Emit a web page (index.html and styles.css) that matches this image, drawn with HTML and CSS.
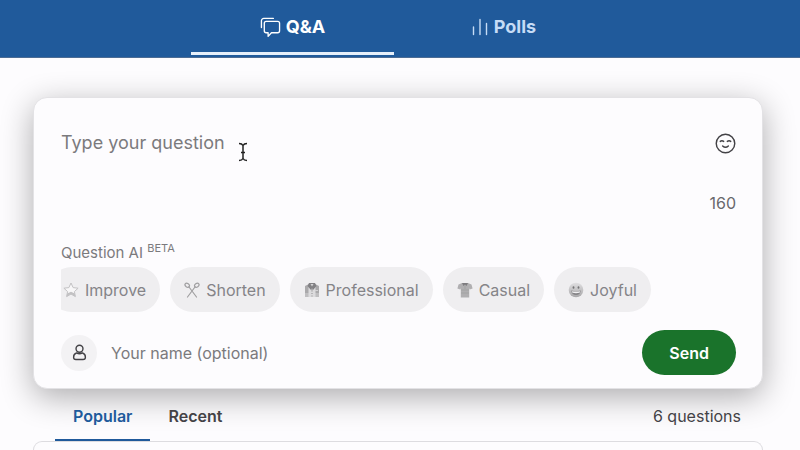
FILE: index.html
```
<!DOCTYPE html>
<html lang="en">
<head>
    <meta charset="UTF-8">
    <meta name="viewport" content="width=device-width, initial-scale=1.0">
    <title>Q&amp;A</title>
    <link rel="stylesheet" href="styles.css">
</head>
<body>
    <header class="topbar">
        <nav class="main-tabs">
            <a href="#qa" class="main-tab active">
                <svg width="21" height="21" viewBox="0 0 22 22" fill="none" stroke="currentColor" stroke-width="1.4" stroke-linecap="round" stroke-linejoin="round">
                    <path d="M1.500 11V4A2.500 2.500 0 0 1 4 1.500H14"/>
                    <path d="M6.500 4.500h12a2 2 0 0 1 2 2v8a2 2 0 0 1-2 2H12l-3.500 3.800v-3.800h-2a2 2 0 0 1-2-2v-8a2 2 0 0 1 2-2z"/>
                </svg>
                Q&amp;A
            </a>
            <a href="#polls" class="main-tab">
                <svg width="18" height="18" viewBox="0 0 18 18" fill="none" stroke="currentColor" stroke-width="1.4" stroke-linecap="round">
                    <path d="M2.500 9v7.500M9 1.500v15M15.500 5.500v11"/>
                </svg>
                Polls
            </a>
        </nav>
    </header>

    <main class="page">
        <form class="ask-card">
            <div class="question-row">
                <textarea class="question-input" aria-label="Question" placeholder="Type your question"></textarea>
                <button type="button" class="emoji-button" aria-label="Insert emoji">
                    <svg width="21" height="21" viewBox="0 0 22 22" fill="none" stroke="currentColor" stroke-width="1.500" stroke-linecap="round">
                        <circle cx="11" cy="11" r="9.700"/>
                        <path d="M5.500 8.800q1.700-1.500 3.600 0M12.900 8.800q1.900-1.500 3.600 0M8 13.600q3 2.800 6 0"/>
                    </svg>
                </button>
            </div>
            <div class="char-count">160</div>

            <div class="ai-label">Question AI <sup>BETA</sup></div>
            <div class="chips">
                <button type="button" class="chip">
                    <svg width="16" height="16" viewBox="0 0 16 16">
                        <path d="M8 1l2.100 4.600 5 .6-3.700 3.400 1 5L8 12.100l-4.400 2.500 1-5L.9 6.200l5-.6z" fill="#f8f7f8" stroke="#c3c2c4" stroke-width="1" stroke-linejoin="round"/>
                        <path d="M3.600 14.600l.6-3L8 9.800l3.800 1.800.6 3L8 12.100z" fill="#c2c1c3"/>
                    </svg>
                    Improve
                </button>
                <button type="button" class="chip">
                    <svg width="16" height="16" viewBox="0 0 16 16" fill="none" stroke="#a09fa1" stroke-width="1.200" stroke-linecap="round">
                        <ellipse cx="3.200" cy="3.200" rx="2.400" ry="1.800" transform="rotate(35 3.200 3.200)"/>
                        <ellipse cx="12.800" cy="3.200" rx="2.400" ry="1.800" transform="rotate(-35 12.800 3.200)"/>
                        <path d="M5 5l7.500 10M11 5l-7.500 10"/>
                    </svg>
                    Shorten
                </button>
                <button type="button" class="chip">
                    <svg width="16" height="16" viewBox="0 0 16 16">
                        <path d="M1 4l4-2h6l4 2v11H1z" fill="#aaa9ab"/>
                        <path d="M1 11h14v4H1z" fill="#bfbec0"/>
                        <path d="M4.500 2l3.500 7 3.500-7v13h-7z" fill="#dcdbdd"/>
                        <path d="M5 1h6l1.500 3L9 8 8 5.500 7 8 3.500 4z" fill="#828184"/>
                        <path d="M6.500 2h3L8 4.500z" fill="#d5d4d6"/>
                        <path d="M8 6v9" stroke="#8f8e91" stroke-dasharray="1 1.500"/>
                        <path d="M11 8.500h3" stroke="#d3d2d4"/>
                    </svg>
                    Professional
                </button>
                <button type="button" class="chip">
                    <svg width="16" height="16" viewBox="0 0 16 16">
                        <path d="M5 1L1.500 2.500.4 6.500l2.800.9.600-1.200V15.400h8.400V6.200l.6 1.200 2.800-.9-1.100-4L11 1z" fill="#b0afb1"/>
                        <path d="M5 1h6L9.500 4 8 2.500 6.500 4z" fill="#7d7c7f"/>
                        <path d="M8 3v4M4 8h8M4 11h8" stroke="#9b9a9c" stroke-width=".6"/>
                    </svg>
                    Casual
                </button>
                <button type="button" class="chip">
                    <svg width="16" height="16" viewBox="0 0 16 16">
                        <defs>
                            <linearGradient id="face" x2="0" y2="1">
                                <stop offset="0" stop-color="#e0dfe1"/>
                                <stop offset="1" stop-color="#a8a7a9"/>
                            </linearGradient>
                        </defs>
                        <circle cx="8" cy="8" r="7.300" fill="url(#face)"/>
                        <ellipse cx="5.500" cy="5.500" rx=".9" ry="1.200" fill="#747376"/>
                        <ellipse cx="10.500" cy="5.500" rx=".9" ry="1.200" fill="#747376"/>
                        <path d="M3.200 8.500q4.800 1 9.600 0-.6 4.500-4.800 4.500t-4.800-4.500z" fill="#858487"/>
                        <path d="M3.900 9.200q4.100.8 8.200 0l-.5 1.600q-3.600.8-7.200 0z" fill="#f1f0f2"/>
                    </svg>
                    Joyful
                </button>
            </div>

            <div class="send-row">
                <span class="avatar">
                    <svg width="15" height="17" viewBox="0 0 16 18" fill="none" stroke="currentColor" stroke-width="1.500" stroke-linejoin="round">
                        <circle cx="8" cy="5" r="3.700"/>
                        <path d="M4.800 9.500C2.800 10 1.700 11.800 1.700 14c0 1.700.9 2.500 2.500 2.500h7.600c1.600 0 2.500-.8 2.500-2.500 0-2.200-1.100-4-3.100-4.500-1.900 1-4.500 1-6.400 0z"/>
                    </svg>
                </span>
                <input type="text" class="name-input" aria-label="Your name" placeholder="Your name (optional)">
                <button type="submit" class="send-button">Send</button>
            </div>

            <svg class="cursor" width="10" height="20" viewBox="0 0 10 20" fill="none" stroke="#222" stroke-width="1.500">
                <path d="M1 1.500q3 0 4 2 1-2 4-2M5 3v14M1 18.500q3 0 4-2 1 2 4 2M3 10.500h4"/>
            </svg>
        </form>

        <div class="list-head">
            <nav class="sort-tabs">
                <a href="#popular" class="sort-tab active">Popular</a>
                <a href="#recent" class="sort-tab">Recent</a>
            </nav>
            <span class="question-count">6 questions</span>
        </div>
        <section class="question-card" aria-label="Questions"></section>
    </main>
</body>
</html>
```

FILE: styles.css
```
:root {
    --blue: #205a9b;
    --green: #1a732b;
    --surface: #fdfcfe;
    --chip: #efeef0;
    --text: #434246;
    --muted: #7b7a7d;
}

* {
    box-sizing: border-box;
    margin: 0;
    padding: 0;
}

body {
    display: flex;
    flex-direction: column;
    min-height: 100vh;
    background: var(--surface);
    color: var(--text);
    font-family: Inter, "Liberation Sans", sans-serif;
    font-size: 16px;
    line-height: 20px;
}

button,
input,
textarea {
    font: inherit;
    color: inherit;
    border: none;
    background: none;
    outline: none;
}

button {
    cursor: pointer;
}

a {
    color: inherit;
    text-decoration: none;
}

svg {
    display: block;
    flex-shrink: 0;
}

.topbar {
    padding-right: 4px;
    background: var(--blue);
    border-bottom: 1px solid #4c6c94;
}

.main-tabs {
    display: flex;
    justify-content: center;
    gap: 8px;
    padding-bottom: 2px;
}

.main-tab {
    display: flex;
    align-items: center;
    justify-content: center;
    gap: 5px;
    width: 203px;
    height: 55px;
    padding-top: 2px;
    border-bottom: 3px solid transparent;
    color: #c6dcf6;
    font-size: 18px;
    font-weight: 700;
}

.main-tab.active {
    color: #fff;
    border-color: #e6effa;
}

.page {
    display: flex;
    flex-direction: column;
    flex: 1;
    padding: 39px 37px 0 33px;
}

.ask-card {
    position: relative;
    padding: 32px 26px 13px 27px;
    background: var(--surface);
    border: 1px solid #e3e2e5;
    border-radius: 14px;
    box-shadow: 0 8px 32px rgba(0, 0, 0, 0.32);
}

.question-row {
    display: flex;
    align-items: flex-start;
}

.question-input {
    flex: 1;
    height: 63px;
    font-size: 18px;
    line-height: 26px;
    resize: none;
}

.question-input::placeholder,
.name-input::placeholder {
    color: var(--muted);
    opacity: 1;
}

.emoji-button {
    padding-top: 3px;
}

.char-count {
    text-align: right;
    color: #69686c;
}

.ai-label {
    margin-top: 30px;
    font-size: 15px;
    color: var(--muted);
}

.ai-label sup {
    font-size: 11px;
    line-height: 0;
}

.chips {
    display: flex;
    gap: 10px;
    margin-top: 4px;
    overflow: hidden;
}

.chip {
    display: flex;
    align-items: center;
    flex-shrink: 0;
    gap: 6px;
    height: 45px;
    padding: 0 14px;
    border-radius: 23px;
    background: var(--chip);
    color: #858488;
}

.chip:first-child {
    margin-left: -12px;
}

.send-row {
    display: flex;
    align-items: center;
    margin-top: 18px;
}

.avatar {
    display: flex;
    align-items: center;
    justify-content: center;
    width: 36px;
    height: 36px;
    border-radius: 50%;
    background: #f3f2f4;
}

.name-input {
    flex: 1;
    min-width: 0;
    margin-left: 14px;
}

.send-button {
    height: 45px;
    padding: 0 27px;
    border-radius: 23px;
    background: var(--green);
    color: #fff;
    font-weight: 600;
}

.cursor {
    position: absolute;
    left: 204px;
    top: 44px;
}

.list-head {
    position: relative;
    display: flex;
    align-items: center;
    justify-content: space-between;
    padding: 0 22px;
}

.sort-tabs {
    display: flex;
}

.sort-tab {
    height: 52px;
    padding: 0 18px;
    border-bottom: 2px solid transparent;
    line-height: 54px;
    font-weight: 600;
}

.sort-tab.active {
    color: var(--blue);
    border-color: var(--blue);
}

.question-count {
    padding-top: 2px;
}

.question-card {
    position: relative;
    flex: 1;
    background: var(--surface);
    border: 1px solid #dddce0;
    border-bottom: none;
    border-radius: 14px 14px 0 0;
}
```
